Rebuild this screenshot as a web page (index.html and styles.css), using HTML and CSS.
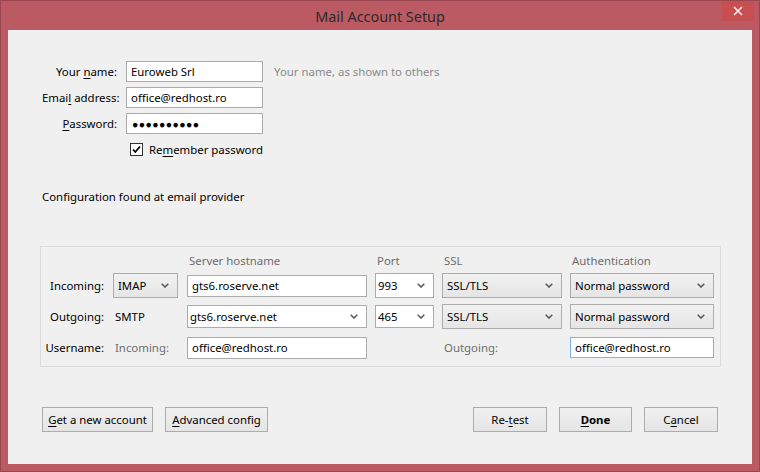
FILE: index.html
```html
<!DOCTYPE html>
<html>
<head>
<meta charset="utf-8">
<link rel="stylesheet" href="styles.css">
</head>
<body>
<div class="window">
  <div class="titlebar">
    <span></span>
    <span class="title">Mail Account Setup</span>
    <div class="close">
      <svg width="10" height="10" viewBox="0 0 10 10"><path d="M1 1L9 9M9 1L1 9" stroke="#fff" stroke-width="1.4" fill="none"/></svg>
    </div>
  </div>
  <div class="client">
    <div class="identity">
      <label class="lbl">Your <u>n</u>ame:</label>
      <div class="field">Euroweb Srl</div>
      <span class="hint">Your name, as shown to others</span>
      <label class="lbl">Emai<u>l</u> address:</label>
      <div class="field">office@redhost.ro</div>
      <span></span>
      <label class="lbl"><u>P</u>assword:</label>
      <div class="field dots">●●●●●●●●●●</div>
      <span></span>
      <span></span>
      <div class="check-row">
        <span class="checkbox"><svg width="11" height="11" viewBox="0 0 11 11"><path d="M2 5.5L4.3 8L9 2.5" stroke="#000" stroke-width="1.8" fill="none"/></svg></span>
        <span>Re<u>m</u>ember password</span>
      </div>
    </div>

    <div class="status">Configuration found at email provider</div>

    <div class="group">
      <span></span><span></span>
      <span class="head">Server hostname</span>
      <span class="head">Port</span>
      <span class="head">SSL</span>
      <span class="head">Authentication</span>

      <span class="rlabel">Incoming:</span>
      <div class="select gray tall proto">IMAP<svg class="chev" width="8" height="5" viewBox="0 0 8 5"><path d="M0.7 0.7L4 4L7.3 0.7" stroke="#555" stroke-width="1.5" fill="none"/></svg></div>
      <div class="field host">gts6.roserve.net</div>
      <div class="select white tall">993<svg class="chev" width="8" height="5" viewBox="0 0 8 5"><path d="M0.7 0.7L4 4L7.3 0.7" stroke="#555" stroke-width="1.5" fill="none"/></svg></div>
      <div class="select gray tall">SSL/TLS<svg class="chev" width="8" height="5" viewBox="0 0 8 5"><path d="M0.7 0.7L4 4L7.3 0.7" stroke="#555" stroke-width="1.5" fill="none"/></svg></div>
      <div class="select gray tall">Normal password<svg class="chev" width="8" height="5" viewBox="0 0 8 5"><path d="M0.7 0.7L4 4L7.3 0.7" stroke="#555" stroke-width="1.5" fill="none"/></svg></div>

      <span class="rlabel">Outgoing:</span>
      <span class="plain">SMTP</span>
      <div class="select white">gts6.roserve.net<svg class="chev" width="8" height="5" viewBox="0 0 8 5"><path d="M0.7 0.7L4 4L7.3 0.7" stroke="#555" stroke-width="1.5" fill="none"/></svg></div>
      <div class="select white">465<svg class="chev" width="8" height="5" viewBox="0 0 8 5"><path d="M0.7 0.7L4 4L7.3 0.7" stroke="#555" stroke-width="1.5" fill="none"/></svg></div>
      <div class="select gray tall">SSL/TLS<svg class="chev" width="8" height="5" viewBox="0 0 8 5"><path d="M0.7 0.7L4 4L7.3 0.7" stroke="#555" stroke-width="1.5" fill="none"/></svg></div>
      <div class="select gray tall">Normal password<svg class="chev" width="8" height="5" viewBox="0 0 8 5"><path d="M0.7 0.7L4 4L7.3 0.7" stroke="#555" stroke-width="1.5" fill="none"/></svg></div>

      <span class="rlabel">Username:</span>
      <span class="plain muted">Incoming:</span>
      <div class="field host">office@redhost.ro</div>
      <span></span>
      <span class="plain muted">Outgoing:</span>
      <div class="field focus">office@redhost.ro</div>
    </div>

    <div class="buttons">
      <div class="btn-group">
        <div class="btn w111"><u>G</u>et a new account</div>
        <div class="btn w103"><u>A</u>dvanced config</div>
      </div>
      <div class="btn-group">
        <div class="btn w74">Re-<u>t</u>est</div>
        <div class="btn w73 bold"><u>D</u>one</div>
        <div class="btn w74">C<u>a</u>ncel</div>
      </div>
    </div>
  </div>
</div>
</body>
</html>
```
FILE: styles.css
```css
* { box-sizing: border-box; }
html, body { margin: 0; padding: 0; }
body {
  width: 760px;
  height: 472px;
  overflow: hidden;
  font-family: "Noto Sans", "Open Sans", sans-serif;
  font-size: 11.4px;
  color: #000;
  background: #bc5a63;
}
u { text-decoration: underline; text-underline-offset: 2px; }

.window {
  width: 760px;
  height: 472px;
  border: 1px solid #9a4650;
  background: #bc5a63;
  display: flex;
  flex-direction: column;
}

.titlebar {
  height: 29px;
  display: grid;
  grid-template-columns: 1fr auto 1fr;
  align-items: center;
}
.title {
  font-size: 14.4px;
  color: #2b2b2b;
  padding-top: 1px;
}
.close {
  justify-self: end;
  align-self: start;
  margin-right: 5px;
  width: 32px;
  height: 20px;
  background: #c74f4f;
  display: flex;
  align-items: center;
  justify-content: center;
}

.client {
  margin: 0 7px;
  height: 434px;
  background: #f0f0f0;
  padding: 31px 34px 0 34px;
  display: flex;
  flex-direction: column;
}

.identity {
  display: grid;
  grid-template-columns: 75px 137px auto;
  grid-template-rows: 21px 21px 21px 21px;
  column-gap: 9px;
  row-gap: 5px;
  align-items: center;
}
.lbl {
  text-align: right;
  white-space: nowrap;
}
.hint { color: #8a8a8a; white-space: nowrap; margin-left: 2px; }

.field {
  height: 21px;
  background: #fff;
  border: 1px solid #ababab;
  padding: 0 4px;
  display: flex;
  align-items: center;
  white-space: nowrap;
  overflow: hidden;
}
.field.dots {
  font-size: 10.5px;
  letter-spacing: 0.4px;
  padding-left: 5px;
}
.field.focus { border-color: #7eb4ea; }
.field.host { height: 22px; }

.check-row {
  grid-column: 2 / 4;
  display: flex;
  align-items: center;
  gap: 6px;
  padding-left: 4px;
  white-space: nowrap;
}
.checkbox {
  width: 13px;
  height: 13px;
  border: 1px solid #333;
  background: #fff;
  display: flex;
  align-items: center;
  justify-content: center;
}

.status {
  margin-top: 28px;
  line-height: 18px;
}

.group {
  margin: 40px -3px 0 -2px;
  border: 1px solid #dcdcdc;
  padding: 3px 6px 3px 0;
  display: grid;
  grid-template-columns: 64px 66px 180px 59px 120px 144px;
  grid-template-rows: 20px 31px 31px 31px;
  column-gap: 8px;
  row-gap: 0;
  align-items: center;
}
.head { color: #6d6d6d; padding-left: 2px; }
.rlabel { text-align: right; padding-right: 1px; }
.plain { padding-left: 2px; }
.muted { color: #6d6d6d; }

.select {
  height: 23px;
  border: 1px solid #acacac;
  padding: 0 8px 0 4px;
  display: flex;
  align-items: center;
  justify-content: space-between;
  white-space: nowrap;
}
.select.tall { height: 25px; }
.select.proto { width: 65px; }
.select.gray { background: linear-gradient(#f2f2f2, #e5e5e5); }
.select.white { background: #fff; padding-left: 2px; }
.chev { flex: none; }

.buttons {
  margin-top: 40px;
  display: flex;
  justify-content: space-between;
}
.btn-group { display: flex; gap: 12px; }
.btn {
  height: 25px;
  border: 1px solid #acacac;
  background: linear-gradient(#f0f0f0, #e5e5e5);
  display: flex;
  align-items: center;
  justify-content: center;
  white-space: nowrap;
}
.bold { font-weight: bold; }
.w111 { width: 111px; }
.w103 { width: 103px; }
.w74 { width: 74px; }
.w73 { width: 73px; }
```
